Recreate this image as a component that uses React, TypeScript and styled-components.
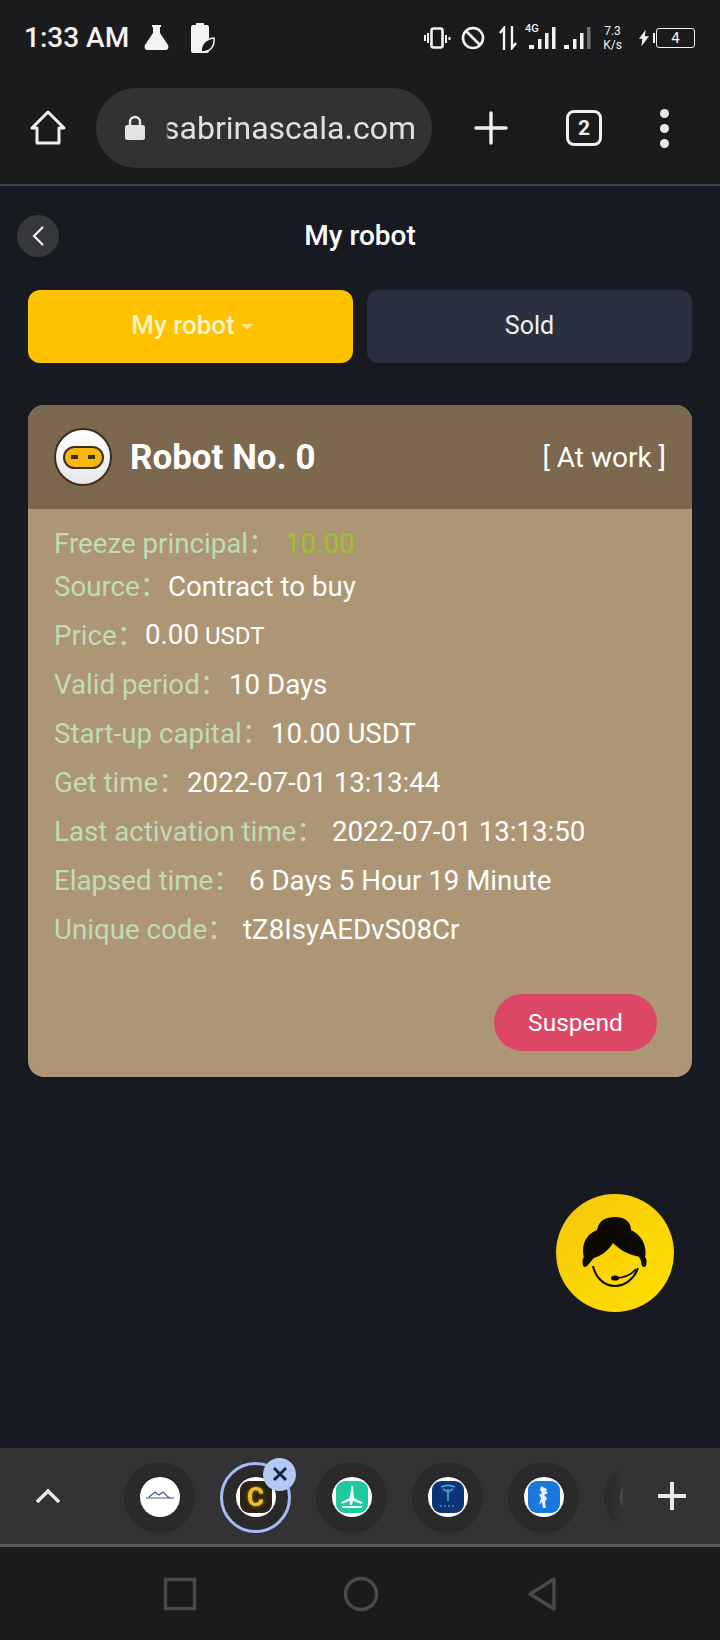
import styled, { createGlobalStyle } from 'styled-components'

const GlobalStyle = createGlobalStyle`
  html, body {
    margin: 0;
    padding: 0;
    background: #171a21;
    font-family: Roboto, "Noto Sans CJK SC", "Liberation Sans", sans-serif;
  }
`

const rows = [
  { label: 'Source', value: 'Contract to buy', labelWidth: 114 },
  { label: 'Price', value: '0.00', unit: 'USDT', labelWidth: 91 },
  { label: 'Valid period', value: '10 Days', labelWidth: 175 },
  { label: 'Start-up capital', value: '10.00 USDT', labelWidth: 217 },
  { label: 'Get time', value: '2022-07-01 13:13:44', labelWidth: 133 },
  { label: 'Last activation time', value: '2022-07-01 13:13:50', labelWidth: 278 },
  { label: 'Elapsed time', value: '6 Days 5 Hour 19 Minute', labelWidth: 195 },
  { label: 'Unique code', value: 'tZ8IsyAEDvS08Cr', labelWidth: 189 },
]

const tabIcons = [
  { bg: '#ffffff', kind: 'hills' },
  { bg: '#2b2418', kind: 'coin', active: true },
  { bg: '#1fc99d', kind: 'wind' },
  { bg: '#0b3474', kind: 'tesla' },
  { bg: '#1878dc', kind: 'horse' },
]

const TabGlyph = ({ kind }: { kind: string }) => {
  if (kind === 'hills') {
    return (
      <svg width="32" height="32" viewBox="0 0 32 32" fill="none">
        <path d="M2 17h28M5 16l6-5 4 3 4-3 5 5 3 1" stroke="#3d5f8a" strokeWidth="1.2" />
      </svg>
    )
  }
  if (kind === 'coin') {
    return <CoinLetter>C</CoinLetter>
  }
  if (kind === 'wind') {
    return (
      <svg width="32" height="32" viewBox="0 0 32 32" fill="#eafff8">
        <path d="M15.5 5h1.5l1 12 8 4v2l-9-3-1 4h-2l-.5-4-8 3v-2l8-4z" />
        <rect x="6" y="25" width="20" height="2" />
      </svg>
    )
  }
  if (kind === 'tesla') {
    return (
      <svg width="32" height="32" viewBox="0 0 32 32" fill="none">
        <path d="M9 6c4-2 10-2 14 0M16 8v12M11 8l5 3 5-3" stroke="#4a9bd8" strokeWidth="1.8" />
        <path d="M8 25h16" stroke="#4a86c8" strokeWidth="1.4" strokeDasharray="2 2" />
      </svg>
    )
  }
  return (
    <svg width="32" height="32" viewBox="0 0 32 32" fill="#e6f1fc">
      <path d="M13 5l6 3-1 2 2 2-4 2 3 3-2 4 1 6h-3l-1-6-3 3 2-7-2-3 3-2-2-3z" />
    </svg>
  )
}

export default function App() {
  return (
    <>
      <GlobalStyle />
      <Screen>
        <StatusBar>
          <StatusLeft>
            <Clock>1:33 AM</Clock>
            <svg width="27" height="27" viewBox="0 0 27 27">
              <path d="M9 1h9v2h-1v6l8 12c1 3 0 5-3 5H5c-3 0-4-2-3-5l8-12V3H9z" fill="#f4f4f4" />
            </svg>
            <StatusSlot $gap={6}>
              <svg width="25" height="30" viewBox="0 0 25 30">
                <path d="M6 0h8v2h3c1 0 2 1 2 2v24c0 1-1 2-2 2H3c-1 0-2-1-2-2V4c0-1 1-2 2-2h3z" fill="#f4f4f4" />
                <path d="M11 29c0-8 5-13 13-14 1 8-3 14-13 14z" fill="#1b1b1d" stroke="#f4f4f4" strokeWidth="1.5" />
              </svg>
            </StatusSlot>
          </StatusLeft>
          <StatusRight>
            <StatusSlot $gap={0}>
              <svg width="27" height="22" viewBox="0 0 27 22" fill="none" stroke="#f2f2f2">
                <rect x="7.5" y="1.5" width="11" height="19" rx="2" strokeWidth="2.6" />
                <path d="M4 6v10M1 8v6M22 8v8M25.5 10v3" strokeWidth="2" />
              </svg>
            </StatusSlot>
            <StatusSlot $gap={10}>
              <svg width="24" height="24" viewBox="0 0 24 24" fill="none" stroke="#f2f2f2" strokeWidth="2.6">
                <circle cx="12" cy="12" r="10" />
                <path d="M5 5l14 14" />
              </svg>
            </StatusSlot>
            <StatusSlot $gap={14}>
              <svg width="18" height="24" viewBox="0 0 18 24" fill="none" stroke="#f2f2f2" strokeWidth="2.4">
                <path d="M5 24V2L1 7" />
                <path d="M13 0v22l4-5" />
              </svg>
            </StatusSlot>
            <SignalGroup>
              <TinyTag>4G</TinyTag>
              <svg width="66" height="24" viewBox="0 0 66 24" fill="#f2f2f2">
                <rect x="4" y="19" width="5" height="4" />
                <rect x="13" y="13" width="3.5" height="10" />
                <rect x="20" y="7" width="3.5" height="16" />
                <rect x="27" y="1" width="3.5" height="22" />
                <rect x="39" y="19" width="5" height="4" />
                <rect x="48" y="13" width="3.5" height="10" />
                <rect x="55" y="7" width="3.5" height="16" />
                <rect x="62" y="1" width="3.5" height="22" fill="#6e6e6e" />
              </svg>
            </SignalGroup>
            <NetSpeed>
              <span>7.3</span>
              <span>K/s</span>
            </NetSpeed>
            <BatteryGroup>
              <svg width="10" height="20" viewBox="0 0 12 20">
                <path d="M8 0L0 11h4l-1 9 9-12H7z" fill="#f2f2f2" />
              </svg>
              <BatteryCap />
              <Battery>4</Battery>
            </BatteryGroup>
          </StatusRight>
        </StatusBar>

        <BrowserBar>
          <BarIcon>
            <svg width="38" height="38" viewBox="0 0 38 38" fill="none" stroke="#f0f0f0" strokeWidth="3" strokeLinejoin="round">
              <path d="M3 19L19 3l16 16h-5v15H8V19z" />
            </svg>
          </BarIcon>
          <UrlPill>
            <svg width="22" height="26" viewBox="0 0 22 26">
              <path d="M6 11V7a5 5 0 0 1 10 0v4" fill="none" stroke="#e4e4e4" strokeWidth="2.4" />
              <rect x="1" y="10" width="20" height="15" rx="2.5" fill="#e4e4e4" />
            </svg>
            <UrlText>sabrinascala.com</UrlText>
          </UrlPill>
          <BarActions>
            <svg width="34" height="34" viewBox="0 0 34 34" stroke="#f0f0f0" strokeWidth="3.4" strokeLinecap="round">
              <path d="M17 2v30M2 17h30" />
            </svg>
            <TabCount>2</TabCount>
            <MenuDots>
              <i />
              <i />
              <i />
            </MenuDots>
          </BarActions>
        </BrowserBar>

        <Page>
          <TopNav>
            <BackButton>
              <svg width="14" height="22" viewBox="0 0 14 22" fill="none" stroke="#f2f2f2" strokeWidth="2.2">
                <path d="M12 2L3 11l9 9" />
              </svg>
            </BackButton>
            <PageTitle>My robot</PageTitle>
          </TopNav>

          <Tabs>
            <TabButton $active>
              <TabLabel>My robot</TabLabel>
              <Caret />
            </TabButton>
            <TabButton>
              <TabLabel>Sold</TabLabel>
            </TabButton>
          </Tabs>

          <Card>
            <CardHead>
              <RobotTitle>
                <RobotAvatar>
                  <RobotVisor>
                    <i />
                    <i />
                  </RobotVisor>
                </RobotAvatar>
                <RobotName>Robot No. 0</RobotName>
              </RobotTitle>
              <RobotState>[ At work ]</RobotState>
            </CardHead>
            <CardBody>
              <FreezeRow>
                <Label $width={231}>Freeze principal：</Label>
                <FreezeValue>10.00</FreezeValue>
              </FreezeRow>
              {rows.map((row) => (
                <Row key={row.label}>
                  <Label $width={row.labelWidth}>{row.label}：</Label>
                  <Value>
                    {row.value}
                    {row.unit && <Unit> {row.unit}</Unit>}
                  </Value>
                </Row>
              ))}
              <CardFooter>
                <SuspendButton>Suspend</SuspendButton>
              </CardFooter>
            </CardBody>
          </Card>

          <HelpFab>
            <svg width="118" height="118" viewBox="0 0 118 118">
              <path
                d="M31 72C24 58 26 42 41 36 43 26 50 23 59 23s16 4 16 13c13 6 19 22 11 36-1-6-2-10-6-10-10-2-18-8-23-13-4 7-12 13-19 15-2 2-5 6-7 8z"
                fill="#0d0a04"
              />
              <ellipse cx="29" cy="68" rx="2.5" ry="5" fill="#0d0a04" />
              <ellipse cx="88" cy="68" rx="2.5" ry="5" fill="#0d0a04" />
              <path d="M37 72c3 13 12 20 22 20s19-7 23-18" fill="none" stroke="#0d0a04" strokeWidth="2" />
              <path d="M80 75c-4 5-11 9-21 9" fill="none" stroke="#0d0a04" strokeWidth="1.6" />
              <ellipse cx="59" cy="84" rx="4" ry="2.6" fill="#0d0a04" />
            </svg>
          </HelpFab>
        </Page>

        <TabStrip>
          <StripChevron>
            <svg width="26" height="16" viewBox="0 0 26 16" fill="none" stroke="#e8e8e8" strokeWidth="3.6">
              <path d="M2 14L13 3l11 11" />
            </svg>
          </StripChevron>
          <StripTabs>
            {tabIcons.map((tab) => (
              <StripTab key={tab.kind} $active={tab.active}>
                <Favicon>
                  <FaviconTile $bg={tab.bg}>
                    <TabGlyph kind={tab.kind} />
                  </FaviconTile>
                </Favicon>
                {tab.active && (
                  <CloseBadge>
                    <svg width="16" height="16" viewBox="0 0 16 16" stroke="#14213f" strokeWidth="3">
                      <path d="M2 2l12 12M14 2L2 14" />
                    </svg>
                  </CloseBadge>
                )}
              </StripTab>
            ))}
            <StripTab>
              <Favicon />
            </StripTab>
          </StripTabs>
          <StripPlus>
            <svg width="30" height="30" viewBox="0 0 30 30" stroke="#ececec" strokeWidth="4">
              <path d="M15 1v28M1 15h28" />
            </svg>
          </StripPlus>
        </TabStrip>

        <NavBar>
          <svg width="34" height="34" viewBox="0 0 34 34" fill="none" stroke="#4a4a4a" strokeWidth="3.4">
            <rect x="2.5" y="2.5" width="29" height="29" />
          </svg>
          <svg width="36" height="36" viewBox="0 0 36 36" fill="none" stroke="#4a4a4a" strokeWidth="3.4">
            <circle cx="18" cy="18" r="15.5" />
          </svg>
          <svg width="32" height="36" viewBox="0 0 32 36" fill="none" stroke="#4a4a4a" strokeWidth="3.4" strokeLinejoin="round">
            <path d="M29 3v30L5 18z" />
          </svg>
        </NavBar>
      </Screen>
    </>
  )
}

const Screen = styled.div`
  width: 720px;
  height: 1640px;
  display: flex;
  flex-direction: column;
  overflow: hidden;
  background: #171a21;
`

const StatusBar = styled.div`
  height: 72px;
  background: #1b1b1d;
  display: flex;
  align-items: center;
  justify-content: space-between;
  padding: 3px 25px 0 24px;
  box-sizing: border-box;
  flex-shrink: 0;
`

const StatusLeft = styled.div`
  display: flex;
  align-items: center;
  gap: 14px;
`

const Clock = styled.span`
  color: #f4f4f4;
  font-size: 28px;
  font-weight: 500;
`

const StatusRight = styled.div`
  display: flex;
  align-items: center;
`

const StatusSlot = styled.span<{ $gap: number }>`
  display: flex;
  margin-left: ${(p) => p.$gap}px;
`

const SignalGroup = styled.div`
  position: relative;
  width: 66px;
  height: 24px;
  margin-left: 8px;
`

const TinyTag = styled.span`
  position: absolute;
  left: 0;
  top: -4px;
  color: #f2f2f2;
  font-size: 11px;
  font-weight: 500;
`

const NetSpeed = styled.div`
  display: flex;
  flex-direction: column;
  align-items: center;
  width: 21px;
  color: #f0f0f0;
  font-size: 12px;
  line-height: 14px;
  margin-left: 11px;
`

const BatteryGroup = styled.div`
  display: flex;
  align-items: center;
  margin-left: 16px;
`

const BatteryCap = styled.span`
  width: 2px;
  height: 10px;
  background: #f2f2f2;
  margin: 0 0 0 4px;
`

const Battery = styled.span`
  width: 39px;
  height: 20px;
  box-sizing: border-box;
  margin-left: 1px;
  border: 1.5px solid #f2f2f2;
  border-radius: 3px;
  color: #f2f2f2;
  font-size: 15px;
  display: flex;
  align-items: center;
  justify-content: center;
`

const BrowserBar = styled.div`
  height: 114px;
  background: #1b1b1d;
  display: flex;
  align-items: center;
  border-bottom: 2px solid #3a4450;
  box-sizing: border-box;
  flex-shrink: 0;
  padding: 0 0 0 29px;
`

const BarIcon = styled.div`
  width: 38px;
  height: 38px;
`

const UrlPill = styled.div`
  width: 336px;
  height: 80px;
  margin-left: 29px;
  border-radius: 40px;
  background: #323234;
  display: flex;
  align-items: center;
  padding-left: 28px;
  box-sizing: border-box;
  gap: 17px;
`

const UrlText = styled.span`
  color: #e0e0e0;
  font-size: 32px;
  white-space: nowrap;
  mask-image: linear-gradient(90deg, transparent 3px, #000 6px);
`

const BarActions = styled.div`
  display: flex;
  align-items: center;
  margin-left: 42px;
  gap: 49px;
`

const TabCount = styled.span`
  width: 36px;
  height: 36px;
  box-sizing: border-box;
  border: 3.4px solid #f0f0f0;
  border-radius: 8px;
  color: #f0f0f0;
  font-size: 21px;
  font-weight: 700;
  margin-left: 9px;
  display: flex;
  align-items: center;
  justify-content: center;
`

const MenuDots = styled.div`
  display: flex;
  flex-direction: column;
  gap: 6px;
  margin-left: 9px;

  i {
    width: 9px;
    height: 9px;
    border-radius: 50%;
    background: #e8e8e8;
    display: block;
  }
`

const Page = styled.div`
  position: relative;
  flex: 1;
  padding: 0 28px;
  background: #171a21;
`

const TopNav = styled.div`
  height: 104px;
  padding-bottom: 5px;
  box-sizing: border-box;
  display: flex;
  align-items: center;
  justify-content: center;
  position: relative;
`

const BackButton = styled.div`
  position: absolute;
  left: -11px;
  top: 29px;
  width: 42px;
  height: 42px;
  border-radius: 50%;
  background: #36383b;
  display: flex;
  align-items: center;
  justify-content: center;
`

const PageTitle = styled.h1`
  margin: 0;
  color: #ffffff;
  font-size: 28px;
  font-weight: 500;
`

const Tabs = styled.div`
  display: grid;
  grid-template-columns: 1fr 1fr;
  gap: 14px;
`

const TabButton = styled.div<{ $active?: boolean }>`
  height: 73px;
  padding: 0 0 3px ${(p) => (p.$active ? 3 : 0)}px;
  box-sizing: border-box;
  border-radius: 12px;
  background: ${(p) => (p.$active ? '#fec200' : '#2a3040')};
  color: ${(p) => (p.$active ? '#fff4c4' : '#f0f0f0')};
  font-size: ${(p) => (p.$active ? 26 : 25)}px;
  font-weight: ${(p) => (p.$active ? 500 : 400)};
  display: flex;
  align-items: center;
  justify-content: center;
`

const TabLabel = styled.span`
  white-space: nowrap;
`

const Caret = styled.span`
  width: 0;
  height: 0;
  margin: 3px 0 0 6px;
  border-left: 6px solid transparent;
  border-right: 6px solid transparent;
  border-top: 6px solid #ffe38a;
`

const Card = styled.section`
  margin-top: 42px;
  border-radius: 16px;
  overflow: hidden;
  background: #ad9675;
`

const CardHead = styled.div`
  height: 104px;
  background: #7c684e;
  display: flex;
  align-items: center;
  justify-content: space-between;
  padding: 0 26px;
`

const RobotTitle = styled.div`
  display: flex;
  align-items: center;
  gap: 18px;
`

const RobotAvatar = styled.div`
  width: 58px;
  height: 58px;
  box-sizing: border-box;
  border: 2px solid #3d2f20;
  border-radius: 50%;
  background: linear-gradient(#ffffff, #e6e6e6);
  display: flex;
  align-items: center;
  justify-content: center;
`

const RobotVisor = styled.div`
  width: 41px;
  height: 23px;
  box-sizing: border-box;
  border: 2px solid #3d2f20;
  border-radius: 12px;
  background: #f7b70f;
  display: flex;
  align-items: center;
  justify-content: center;
  gap: 10px;

  i {
    width: 7px;
    height: 4px;
    background: #3d2f20;
    display: block;
  }
`

const RobotName = styled.span`
  color: #ffffff;
  font-size: 35px;
  font-weight: 700;
`

const RobotState = styled.span`
  color: #ffffff;
  font-size: 28px;
`

const CardBody = styled.div`
  height: 568px;
  padding: 16px 26px 0;
  box-sizing: border-box;
  display: flex;
  flex-direction: column;
`

const Row = styled.div`
  height: 49px;
  display: flex;
  align-items: center;
  font-size: 27.7px;
  line-height: 34px;
  white-space: nowrap;
`

const FreezeRow = styled(Row)`
  height: 37px;
`

const Label = styled.span<{ $width: number }>`
  width: ${(p) => p.$width}px;
  flex-shrink: 0;
  color: #bfdcb4;
`

const Value = styled.span`
  color: #ffffff;
`

const Unit = styled.span`
  font-size: 24px;
`

const FreezeValue = styled.span`
  color: #9dc32c;
`

const CardFooter = styled.div`
  margin-top: 40px;
  display: flex;
  justify-content: flex-end;
  padding-right: 9px;
`

const SuspendButton = styled.div`
  width: 163px;
  height: 57px;
  border-radius: 29px;
  background: #dd4767;
  color: #ffffff;
  font-size: 24.5px;
  display: flex;
  align-items: center;
  justify-content: center;
`

const HelpFab = styled.div`
  position: absolute;
  left: 556px;
  top: 1008px;
  width: 118px;
  height: 118px;
  border-radius: 50%;
  background: linear-gradient(135deg, #f5c60a, #ffe000);
`

const TabStrip = styled.div`
  height: 99px;
  background: #333335;
  border-bottom: 3px solid #5b5b5c;
  box-sizing: border-box;
  display: flex;
  align-items: center;
  flex-shrink: 0;
`

const StripChevron = styled.div`
  width: 96px;
  padding-left: 35px;
  box-sizing: border-box;
  display: flex;
`

const StripTabs = styled.div`
  width: 528px;
  overflow: hidden;
  display: flex;
  align-items: center;
  gap: 25px;
  padding: 8px 0 6px 28px;
  box-sizing: border-box;
  mask-image: linear-gradient(90deg, #000 calc(100% - 24px), transparent);
`

const StripTab = styled.div<{ $active?: boolean }>`
  position: relative;
  flex-shrink: 0;
  width: 71px;
  height: 71px;
  box-sizing: border-box;
  border-radius: 50%;
  background: #2a2a2c;
  border: ${(p) => (p.$active ? '3px solid #a3bdf0' : 'none')};
  display: flex;
  align-items: center;
  justify-content: center;
`

const Favicon = styled.div`
  width: 40px;
  height: 40px;
  border-radius: 50%;
  background: #ffffff;
  display: flex;
  align-items: center;
  justify-content: center;
  overflow: hidden;
`

const FaviconTile = styled.div<{ $bg: string }>`
  width: 32px;
  height: 32px;
  border-radius: 9px;
  background: ${(p) => p.$bg};
  display: flex;
  align-items: center;
  justify-content: center;
`

const CoinLetter = styled.span`
  color: #f2c21c;
  font-size: 26px;
  font-weight: 700;
  line-height: 32px;
  text-shadow: 0 0 3px #c99a10;
`

const CloseBadge = styled.div`
  position: absolute;
  right: -8px;
  top: -7px;
  width: 33px;
  height: 33px;
  border-radius: 50%;
  background: #b1c9f3;
  display: flex;
  align-items: center;
  justify-content: center;
`

const StripPlus = styled.div`
  width: 30px;
  margin-left: 33px;
  display: flex;
`

const NavBar = styled.div`
  height: 93px;
  background: #1b1b1d;
  display: flex;
  align-items: center;
  justify-content: center;
  gap: 146px;
  flex-shrink: 0;
`
